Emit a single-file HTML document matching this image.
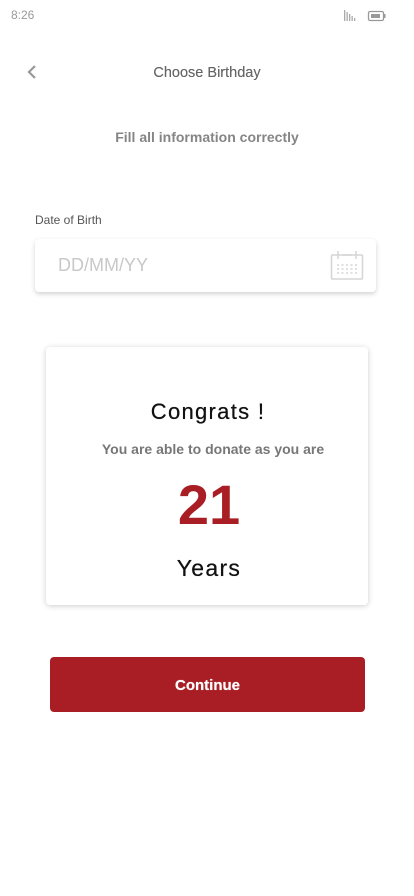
<!DOCTYPE html>
<html><head><style>
body{margin:0;width:414px;height:896px;background:#fff;font-family:"Liberation Sans",sans-serif;position:relative;overflow:hidden}
.a{position:absolute}
</style></head><body>
<div class="a" style="left:11px;top:8px;font-size:12px;color:#999">8:26</div>
<svg class="a" style="left:344px;top:10px" width="46" height="14"><g fill="#aaa"><rect x="0" y="0" width="1.3" height="11"/><rect x="2.5" y="2" width="1.3" height="9"/><rect x="5" y="4" width="1.3" height="7"/><rect x="7.5" y="6" width="1.3" height="5"/><rect x="10" y="8" width="1.3" height="3"/></g><rect x="24.5" y="1.5" width="15" height="9" rx="1.5" fill="none" stroke="#999" stroke-width="1.3"/><rect x="27" y="4" width="9" height="4" fill="#999"/><rect x="40" y="4" width="1.5" height="4" fill="#999"/></svg>
<svg class="a" style="left:26px;top:64px" width="12" height="16"><path d="M9 2L3 8l6 6" fill="none" stroke="#999" stroke-width="2.2"/></svg>
<div class="a" style="left:0;width:414px;top:65px;text-align:center;font-size:14.5px;color:#666;text-shadow:0 0 0.3px #666">Choose Birthday</div>
<div class="a" style="left:0;width:414px;top:129px;text-align:center;font-size:14px;color:#707070;font-weight:bold;opacity:.85">Fill all information correctly</div>
<div class="a" style="left:35px;top:213px;font-size:12px;color:#555">Date of Birth</div>
<div class="a" style="left:35px;top:239px;width:341px;height:53px;background:#fff;border-radius:4px;box-shadow:0 2px 5px rgba(0,0,0,.18)"></div>
<div class="a" style="left:58px;top:255px;font-size:18px;color:#c8c8c8">DD/MM/YY</div>
<svg class="a" style="left:330px;top:250px" width="34" height="30" fill="none" stroke="#d5d5d5" stroke-width="1.5"><rect x="1.5" y="5" width="31" height="24" rx="1"/><path d="M8 1v8M26 1v8M12 5h10"/><g stroke-dasharray="2 2.5"><path d="M7 15h21M7 19h21M7 23h21"/></g></svg>
<div class="a" style="left:46px;top:347px;width:322px;height:258px;background:#fff;border-radius:4px;box-shadow:0 1px 6px rgba(0,0,0,.2)"></div>
<div class="a" style="left:0;width:416px;top:399px;text-align:center;font-size:22px;letter-spacing:1.3px;color:#111;text-shadow:0 0 0.5px #111">Congrats !</div>
<div class="a" style="left:6px;width:414px;top:441px;text-align:center;font-size:14px;color:#777;font-weight:bold">You are able to donate as you are</div>
<div class="a" style="left:2px;width:414px;top:473px;text-align:center;font-size:56px;font-weight:bold;color:#a81e24;line-height:64px">21</div>
<div class="a" style="left:2px;width:414px;top:555px;text-align:center;font-size:23px;letter-spacing:1.3px;color:#111;text-shadow:0 0 0.5px #111">Years</div>
<div class="a" style="left:50px;top:657px;width:315px;height:55px;background:#a81e24;border-radius:4px;color:#fff;font-weight:bold;font-size:15px;text-align:center;line-height:57px;text-shadow:0 0 0.6px #fff">Continue</div>
</body></html>
